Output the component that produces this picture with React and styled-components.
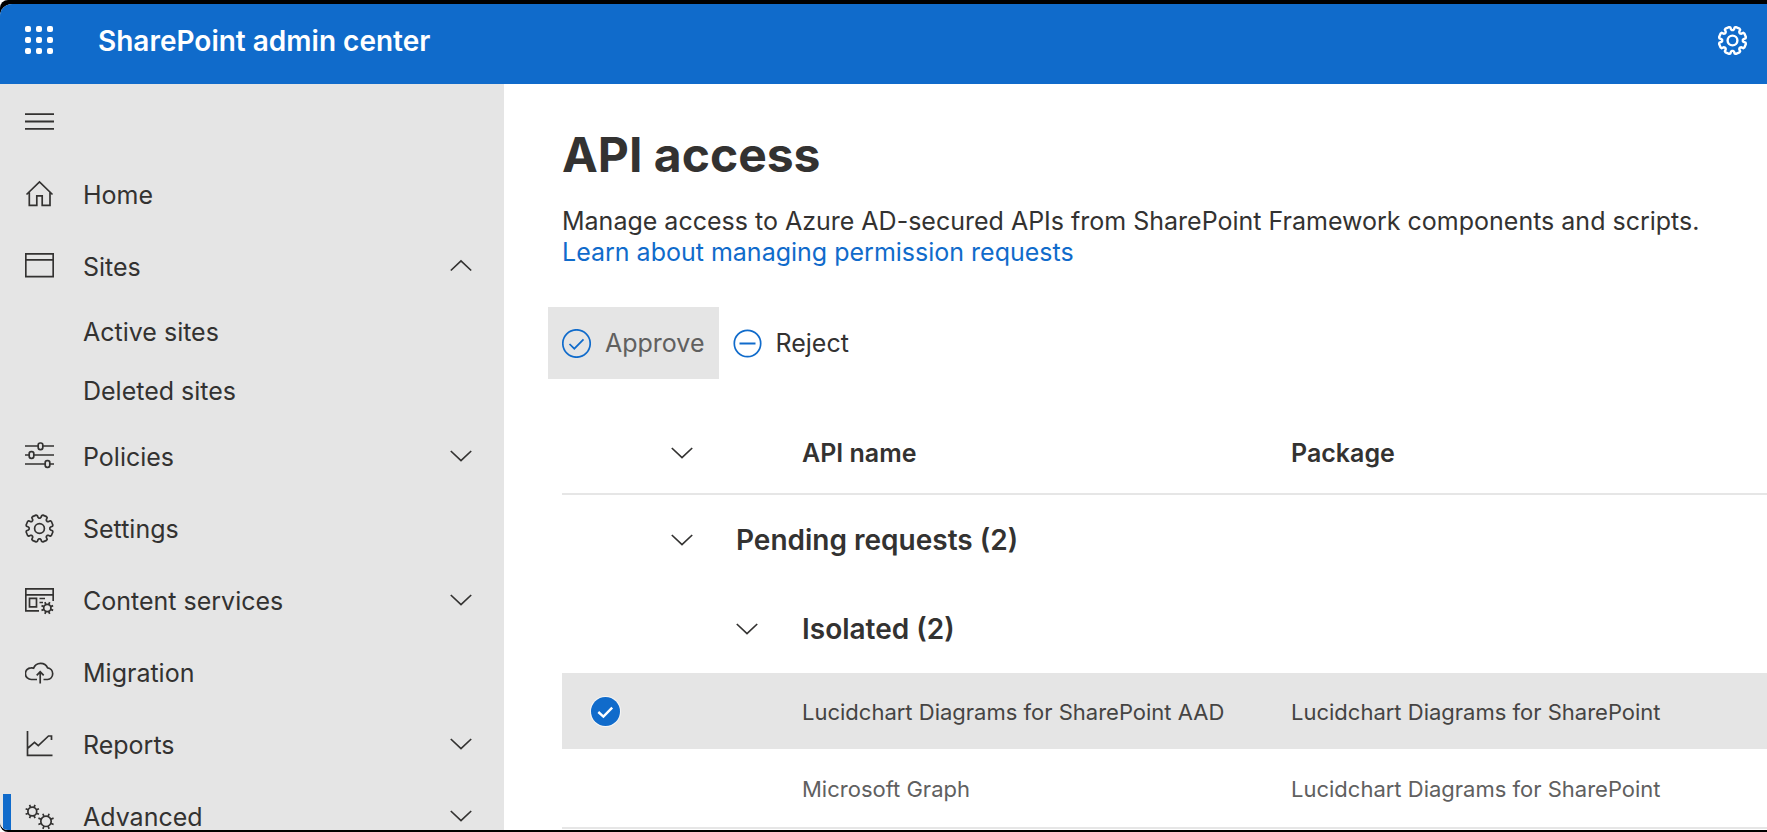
import React from "react";
import styled, { createGlobalStyle } from "styled-components";

const blue = "#106bcb";
const grey = "#e5e5e5";
const ink = "#333231";

const GlobalStyle = createGlobalStyle`
  *, *::before, *::after { box-sizing: border-box; }
  body { margin: 0; background: #fff; color: ${ink}; font-family: Inter, "Liberation Sans", sans-serif; font-size: 25px; line-height: 31px; }
  button { display: block; font: inherit; color: inherit; background: none; border: 0; padding: 0; margin: 0; text-align: left; cursor: pointer; }
  svg { display: block; flex: none; }
`;

const Frame = styled.div`
  display: flex;
  height: 100vh;
  padding: 4px 0 2px;
  background: #000;
  border-radius: 8px 0 0 8px;
`;

const Screen = styled.div`
  flex: 1;
  min-width: 0;
  display: flex;
  flex-direction: column;
  background: #fff;
  border-radius: 12px 0 0 8px;
  overflow: hidden;
`;

const TopBar = styled.header`
  display: flex;
  align-items: center;
  flex: none;
  height: 80px;
  padding: 0 20px 8px 25px;
  background: ${blue};
  color: #fff;
`;

const Brand = styled.div`
  flex: 1;
  padding-top: 2px;
  margin-left: 44px;
  font-size: 28px;
  line-height: 36px;
  font-weight: 600;
`;

const Body = styled.div`
  display: flex;
  flex: 1;
  min-height: 0;
`;

const Sidebar = styled.nav`
  flex: none;
  width: 504px;
  background: ${grey};
  overflow: hidden;
`;

const MenuToggle = styled.button`
  display: flex;
  align-items: center;
  height: 74px;
  padding-left: 25px;
`;

const NavList = styled.ul`
  list-style: none;
  margin: 0;
  padding: 0;
`;

const NavItem = styled.button`
  display: flex;
  align-items: center;
  gap: 29px;
  width: 100%;
  height: 72px;
  padding: 0 32px 0 ${(p) => (p.$current ? 17 : 25)}px;
  ${(p) => p.$current && `
    &::before {
      content: "";
      width: 8px;
      height: 44px;
      margin: 0 -15px 0 -14px;
      background: ${blue};
    }
  `}
`;

const NavLabel = styled.span`
  flex: 1;
  padding-top: 2px;
`;

const SubLink = styled.a`
  display: flex;
  align-items: center;
  height: 59px;
  padding: 2px 0 0 83px;
  color: inherit;
  text-decoration: none;
`;

const Main = styled.main`
  flex: 1;
  min-width: 0;
  padding: 41px 0 0 58px;
  overflow: hidden;
`;

const Title = styled.h1`
  margin: 0;
  font-size: 48px;
  line-height: 60px;
  font-weight: 700;
`;

const Intro = styled.p`
  margin: 21px 0 0;
`;

const LearnLink = styled.a`
  display: block;
  color: ${blue};
  text-decoration: none;
`;

const Commands = styled.div`
  display: flex;
  margin: 39px 0 0 -14px;
`;

const Command = styled.button`
  display: flex;
  align-items: center;
  gap: 14px;
  height: 72px;
  padding: 0 14px;
  background: ${(p) => (p.$active ? grey : "transparent")};
  color: ${(p) => (p.$active ? "#60605f" : ink)};
`;

const Grid = styled.table`
  width: 100%;
  margin-top: 34px;
  table-layout: fixed;
  border-collapse: separate;
  border-spacing: 0;

  th, td {
    padding: 0;
    text-align: left;
    vertical-align: middle;
  }
`;

const Col = styled.col`
  width: ${(p) => (p.$w ? p.$w + "px" : "auto")};
`;

const HeadRow = styled.tr`
  height: 82px;

  th {
    font-weight: 600;
    border-bottom: 2px solid #e6e6e6;
  }
`;

const GroupRow = styled.tr`
  height: 89px;

  th {
    font-size: 28px;
    line-height: 36px;
    font-weight: 600;
  }
`;

const DataRow = styled.tr`
  height: ${(p) => (p.$selected ? 76 : 80)}px;
  background: ${(p) => (p.$selected ? grey : "transparent")};
  color: ${(p) => (p.$selected ? "#454443" : "#60605f")};
  font-size: 22px;

  td {
    padding-top: 2px;
    white-space: nowrap;
    border-bottom: ${(p) => (p.$selected ? "0" : "2px solid #e6e6e6")};
  }
  td:first-child { padding-top: 0; }
`;

const Check = styled.label`
  display: grid;
  width: 29px;
  height: 29px;
  margin-left: 29px;
  opacity: ${(p) => (p.$shown ? 1 : 0)};
  &:hover { opacity: 1; }

  > * { grid-area: 1 / 1; }
`;

const CheckInput = styled.input`
  appearance: none;
  width: 29px;
  height: 29px;
  margin: 0;
  border-radius: 50%;
  background: ${blue};
  box-shadow: 0 0 0 1px #f6f6f6;
`;

const stroke = { fill: "none", stroke: "currentColor", strokeWidth: 1.7 };

function gearPath(cx, cy, outer, inner) {
  const at = (deg, r) => {
    const a = (deg * Math.PI) / 180;
    return `${(cx + r * Math.cos(a)).toFixed(2)} ${(cy + r * Math.sin(a)).toFixed(2)}`;
  };
  const pts = [];
  for (let k = 0; k < 8; k++) {
    const a = 22.5 + 45 * k;
    pts.push(at(a - 13, outer - 0.6), at(a - 8, outer), at(a + 8, outer), at(a + 13, outer - 0.6), at(a + 15, inner + 0.8), at(a + 19, inner), at(a + 26, inner), at(a + 30, inner + 0.8));
  }
  return `M${pts.join("L")}Z`;
}

const rays = (cx, cy, a, b) => {
  let d = "";
  for (let k = 0; k < 8; k++) {
    const t = ((22.5 + 45 * k) * Math.PI) / 180;
    d += `M${(cx + a * Math.cos(t)).toFixed(2)} ${(cy + a * Math.sin(t)).toFixed(2)}L${(cx + b * Math.cos(t)).toFixed(2)} ${(cy + b * Math.sin(t)).toFixed(2)}`;
  }
  return d;
};

const Icon = ({ children, size = 29, ...rest }) => (
  <svg width={size} height={size} viewBox={`0 0 ${size} ${size}`} aria-hidden="true" {...stroke} {...rest}>
    {children}
  </svg>
);

const Gear = (props) => (
  <Icon strokeLinejoin="round" {...props}>
    <path d={gearPath(14.5, 14.5, 13.8, 10.4)} />
    <circle cx="14.5" cy="14.5" r="4.9" />
  </Icon>
);

const Waffle = () => (
  <Icon stroke="none" fill="#fff">
    {[3, 14, 25].map((y) => [3, 14, 25].map((x) => <rect key={`${x}-${y}`} x={x - 3} y={y - 3} width="6" height="6" rx="2" />))}
  </Icon>
);

const Burger = () => (
  <Icon strokeWidth="1.8"><path d="M0 7.2H29M0 14.5H29M0 21.8H29" /></Icon>
);

const Chevron = ({ up }) => (
  <Icon size={22}><path d={up ? "M.8 15.5L11 6L21.2 15.5" : "M.8 6L11 15.5L21.2 6"} /></Icon>
);

const icons = {
  home: <Icon><path d="M1.5 14.5L14.5 2L27.5 14.5M4.3 12.5V25.3H11.8V15.8H17.2V25.3H25V12.5" /></Icon>,
  sites: <Icon><path d="M.8 1.8H28.2V24.6H.8ZM.8 7.8H28.2" /></Icon>,
  policies: (
    <Icon>
      <path d="M0 4H13M18 4H29M0 13H4M9 13H29M0 22H20M25 22H29" />
      <rect x="13.2" y="1" width="4.6" height="6.6" rx="2" />
      <rect x="4.2" y="9.7" width="4.6" height="6.6" rx="2" />
      <rect x="20.2" y="18.7" width="4.6" height="6.6" rx="2" />
    </Icon>
  ),
  settings: <Gear />,
  content: (
    <Icon>
      <path d="M14 24.8H.8V2.8H28.2V15M.8 8.8H28.2M4.5 12.3H11.5V20.8H4.5ZM14.5 12.5H20M14.5 16.5H18" />
      <circle cx="22.3" cy="22" r="3.6" />
      <path d={rays(22.3, 22, 3.6, 6.3)} />
    </Icon>
  ),
  migration: (
    <Icon>
      <path d="M12 21.5H6.5A5.8 5.8 0 0 1 6 9.8C7 9.7 7.9 9.9 8.6 10.1A7.6 7.6 0 0 1 22.6 9.8A5.9 5.9 0 0 1 22.5 21.5H18.5M15.2 25.5V14M11.7 17.4L15.2 13.8L18.7 17.4" />
    </Icon>
  ),
  reports: <Icon><path d="M2.5 1V25.3H27.5M3 18L9.5 12.3L13.3 15.7L23.5 6H26.5V10" /></Icon>,
  advanced: (
    <Icon>
      <circle cx="7.3" cy="9.5" r="4.4" /><path d={rays(7.3, 9.5, 4.4, 7.2)} />
      <circle cx="21" cy="19.3" r="5.2" /><path d={rays(21, 19.3, 5.2, 8.2)} />
    </Icon>
  ),
};

const navItems = [
  { label: "Home", icon: "home" },
  { label: "Sites", icon: "sites", open: true, children: ["Active sites", "Deleted sites"] },
  { label: "Policies", icon: "policies", open: false },
  { label: "Settings", icon: "settings" },
  { label: "Content services", icon: "content", open: false },
  { label: "Migration", icon: "migration" },
  { label: "Reports", icon: "reports", open: false },
  { label: "Advanced", icon: "advanced", open: false, current: true },
];

const requests = [
  { api: "Lucidchart Diagrams for SharePoint AAD", pkg: "Lucidchart Diagrams for SharePoint", selected: true },
  { api: "Microsoft Graph", pkg: "Lucidchart Diagrams for SharePoint", selected: false },
];

export default function App() {
  return (
    <Frame>
      <GlobalStyle />
      <Screen>
        <TopBar>
          <button aria-label="App launcher"><Waffle /></button>
          <Brand>SharePoint admin center</Brand>
          <button aria-label="Settings"><Gear strokeWidth="2.4" /></button>
        </TopBar>
        <Body>
          <Sidebar>
            <MenuToggle aria-label="Collapse navigation"><Burger /></MenuToggle>
            <NavList>
              {navItems.map((item) => (
                <li key={item.label}>
                  <NavItem $current={item.current} aria-expanded={item.open}>
                    {icons[item.icon]}
                    <NavLabel>{item.label}</NavLabel>
                    {item.open !== undefined && <Chevron up={item.open} />}
                  </NavItem>
                  {item.children && (
                    <NavList>
                      {item.children.map((name) => (
                        <li key={name}><SubLink href="#">{name}</SubLink></li>
                      ))}
                    </NavList>
                  )}
                </li>
              ))}
            </NavList>
          </Sidebar>
          <Main>
            <Title>API access</Title>
            <Intro>
              Manage access to Azure AD-secured APIs from SharePoint Framework components and scripts.
              <LearnLink href="#">Learn about managing permission requests</LearnLink>
            </Intro>
            <Commands>
              <Command $active>
                <Icon color={blue}><circle cx="14.5" cy="14.5" r="13.7" /><path d="M7.5 15L12.3 19.7L21.5 10.3" /></Icon>
                Approve
              </Command>
              <Command>
                <Icon color={blue}><circle cx="14.5" cy="14.5" r="13.2" /><path d="M6.5 14.5H22.5" strokeWidth="2" /></Icon>
                Reject
              </Command>
            </Commands>
            <Grid>
              <colgroup>
                <Col $w={109} /><Col $w={65} /><Col $w={66} /><Col $w={489} /><Col />
              </colgroup>
              <thead>
                <HeadRow>
                  <th />
                  <th><button aria-label="Collapse all groups"><Chevron /></button></th>
                  <th />
                  <th scope="col">API name</th>
                  <th scope="col">Package</th>
                </HeadRow>
              </thead>
              <tbody>
                <GroupRow>
                  <td />
                  <td><button aria-label="Collapse pending requests"><Chevron /></button></td>
                  <th colSpan={3} scope="rowgroup">Pending requests (2)</th>
                </GroupRow>
                <GroupRow>
                  <td colSpan={2} />
                  <td><button aria-label="Collapse isolated"><Chevron /></button></td>
                  <th colSpan={2} scope="rowgroup">Isolated (2)</th>
                </GroupRow>
                {requests.map((r) => (
                  <DataRow key={r.api} $selected={r.selected}>
                    <td colSpan={3}>
                      <Check $shown={r.selected}>
                        <CheckInput type="checkbox" defaultChecked={r.selected} aria-label={`Select ${r.api}`} />
                        <Icon color="#fff" strokeWidth="2.4"><path d="M7.3 15L12.4 19.6L21.2 10.6" /></Icon>
                      </Check>
                    </td>
                    <td>{r.api}</td>
                    <td>{r.pkg}</td>
                  </DataRow>
                ))}
              </tbody>
            </Grid>
          </Main>
        </Body>
      </Screen>
    </Frame>
  );
}
